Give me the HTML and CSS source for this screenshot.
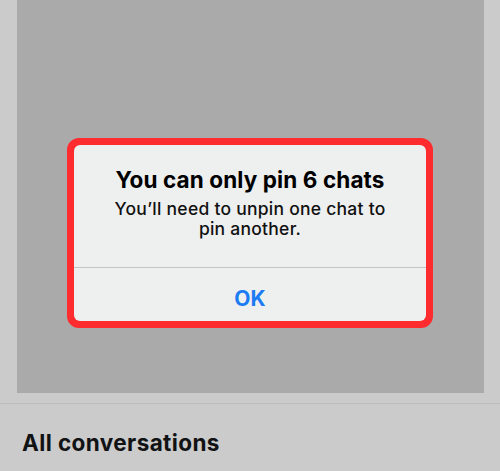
FILE: index.html
```html
<!DOCTYPE html>
<html>
<head>
<meta charset="utf-8">
<link rel="stylesheet" href="styles.css">
</head>
<body>
  <div class="screen">
    <div class="panel"></div>
    <div class="divider"></div>
    <h2 class="section-title">All conversations</h2>
    <div class="alert-frame">
      <div class="alert">
        <div class="alert-body">
          <div class="alert-title">You can only pin 6 chats</div>
          <div class="alert-message">You’ll need to unpin one chat to pin another.</div>
        </div>
        <div class="alert-actions">
          <div class="alert-button">OK</div>
        </div>
      </div>
    </div>
  </div>
</body>
</html>
```
FILE: styles.css
```css
html, body {
  margin: 0;
  padding: 0;
  background: #cbcbcb;
  font-family: Inter, "Noto Sans", sans-serif;
}
.screen {
  position: relative;
  width: 500px;
  height: 471px;
  overflow: hidden;
}
.panel {
  margin: 0 16px 0 17px;
  height: 393px;
  background: #aaaaaa;
}
.divider {
  margin-top: 10px;
  height: 1px;
  background: #bcbcbc;
}
.section-title {
  margin: 0;
  padding: 26px 0 0 22px;
  font-size: 22.5px;
  font-weight: 700;
  letter-spacing: 0.4px;
  color: #111214;
  line-height: 26px;
}
.alert-frame {
  position: absolute;
  left: 67px;
  top: 138px;
  width: 352px;
  height: 176px;
  border: 7px solid #fe2b2f;
  border-radius: 12px;
  background: #fe2b2f;
}
.alert {
  height: 100%;
  background: #eeefef;
  border-radius: 6px;
  display: flex;
  flex-direction: column;
}
.alert-body {
  height: 123px;
  box-sizing: border-box;
  padding: 21px 20px 0;
  text-align: center;
  border-bottom: 1px solid #c4c4c4;
}
.alert-title {
  font-size: 22.5px;
  font-weight: 700;
  letter-spacing: 0.1px;
  color: #000;
  line-height: 27px;
}
.alert-message {
  margin: 6px auto 0;
  width: 280px;
  font-size: 17.5px;
  font-weight: 500;
  letter-spacing: 0.25px;
  color: #111;
  line-height: 20px;
}
.alert-actions {
  flex: 1;
  display: flex;
  align-items: center;
  justify-content: center;
}
.alert-button {
  font-size: 21px;
  font-weight: 700;
  color: #1b7cf4;
  line-height: 24px;
  padding-top: 8px;
}
```
